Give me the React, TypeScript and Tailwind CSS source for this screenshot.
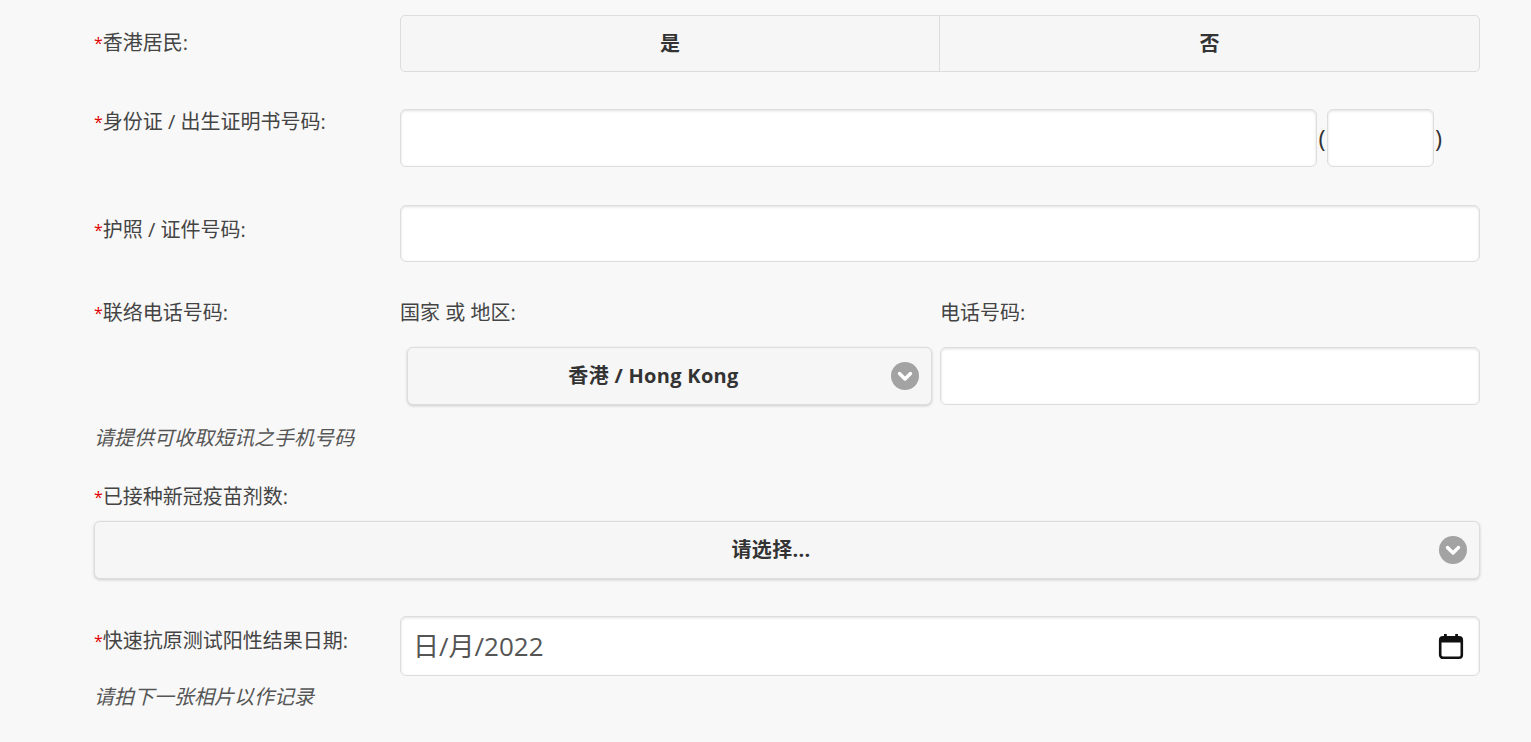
import React from "react";

const font = {
  fontFamily: '"Open Sans", "Noto Sans CJK SC", sans-serif',
};

function Req({ text }: { text: string }) {
  return (
    <span>
      <span className="text-[#e00000] text-[16px] align-top">*</span>
      {text}
    </span>
  );
}

function Chevron() {
  return (
    <svg width="28" height="28" viewBox="0 0 28 28" className="shrink-0">
      <circle cx="14" cy="14" r="14" fill="#a3a3a3" />
      <path d="M8.5 11.5 L14 17 L19.5 11.5" fill="none" stroke="#fff" strokeWidth="3.4" strokeLinecap="round" strokeLinejoin="round" />
    </svg>
  );
}

const inputCls =
  "bg-white border border-[#dddddd] rounded-[6px] shadow-[inset_0_1px_3px_rgba(0,0,0,0.12)]";

function SelectBtn({ text }: { text: string }) {
  return (
    <div className="relative h-[58px] bg-[#f6f6f6] border border-[#dddddd] rounded-[6px] shadow-[0_1px_3px_rgba(0,0,0,0.18)] flex items-center justify-center pl-[15px] pr-[47px]">
      <span className="font-bold text-[#333333] text-[20px] tracking-[0.3px]">{text}</span>
      <div className="absolute right-[12px] top-1/2 -translate-y-1/2">
        <Chevron />
      </div>
    </div>
  );
}

export default function App() {
  return (
    <div
      className="min-h-screen bg-[#f8f8f8] pl-[94px] pr-[51px] pt-[15px] text-[20px] leading-[26px] text-[#444444]"
      style={font}
    >
      {/* Row 1 */}
      <div className="flex">
        <div className="w-[306px] shrink-0 pt-[15px]">
          <Req text="香港居民:" />
        </div>
        <div className="flex-1 h-[57px] grid grid-cols-2 bg-[#f6f6f6] border border-[#dddddd] rounded-[5px] text-[#333333]">
          <div className="flex items-center justify-center font-bold border-r border-[#dddddd]">是</div>
          <div className="flex items-center justify-center font-bold">否</div>
        </div>
      </div>

      {/* Row 2 */}
      <div className="flex mt-[37px]">
        <div className="w-[306px] shrink-0 pt-0">
          <Req text="身份证 / 出生证明书号码:" />
        </div>
        <div className="flex-1 flex items-center">
          <div className={`w-[917px] h-[58px] ${inputCls}`} />
          <span className="text-[24px] leading-[30px] text-[#333] w-[10px] text-center">(</span>
          <div className={`w-[107px] h-[58px] ${inputCls}`} />
          <span className="text-[24px] leading-[30px] text-[#333] w-[9px] text-center">)</span>
        </div>
      </div>

      {/* Row 3 */}
      <div className="flex mt-[38px]">
        <div className="w-[306px] shrink-0 pt-[12px]">
          <Req text="护照 / 证件号码:" />
        </div>
        <div className={`flex-1 h-[57px] ${inputCls}`} />
      </div>

      {/* Row 4 */}
      <div className="flex mt-[38px]">
        <div className="w-[306px] shrink-0">
          <Req text="联络电话号码:" />
        </div>
        <div className="flex-1 grid grid-cols-2">
          <div>
            <div>国家 或 地区:</div>
            <div className="mt-[21px] ml-[7px] mr-[8px]">
              <SelectBtn text="香港 / Hong Kong" />
            </div>
          </div>
          <div>
            <div>电话号码:</div>
            <div className={`mt-[21px] h-[58px] ${inputCls}`} />
          </div>
        </div>
      </div>

      <div className="mt-[20px] italic text-[#555555]">请提供可收取短讯之手机号码</div>

      {/* Row 5 */}
      <div className="mt-[33px]">
        <Req text="已接种新冠疫苗剂数:" />
      </div>
      <div className="mt-[11px]">
        <SelectBtn text="请选择..." />
      </div>

      {/* Row 6 */}
      <div className="flex mt-[37px]">
        <div className="w-[306px] shrink-0 pt-[12px]">
          <Req text="快速抗原测试阳性结果日期:" />
        </div>
        <div className={`flex-1 h-[60px] ${inputCls} flex items-center justify-between pl-[12px] pr-[15px]`}>
          <span className="text-[26px] text-[#555555]">日/月/2022</span>
          <svg width="26" height="27" viewBox="0 0 26 27">
            <rect x="2.2" y="4.2" width="21.6" height="20.6" rx="2.8" fill="none" stroke="#111" strokeWidth="2.6" />
            <rect x="2" y="4" width="22" height="5.5" fill="#111" />
            <rect x="6" y="1" width="2.8" height="5" fill="#111" />
            <rect x="17.2" y="1" width="2.8" height="5" fill="#111" />
          </svg>
        </div>
      </div>

      <div className="mt-[8px] italic text-[#555555]">请拍下一张相片以作记录</div>
      <div className="h-[40px]" />
    </div>
  );
}
